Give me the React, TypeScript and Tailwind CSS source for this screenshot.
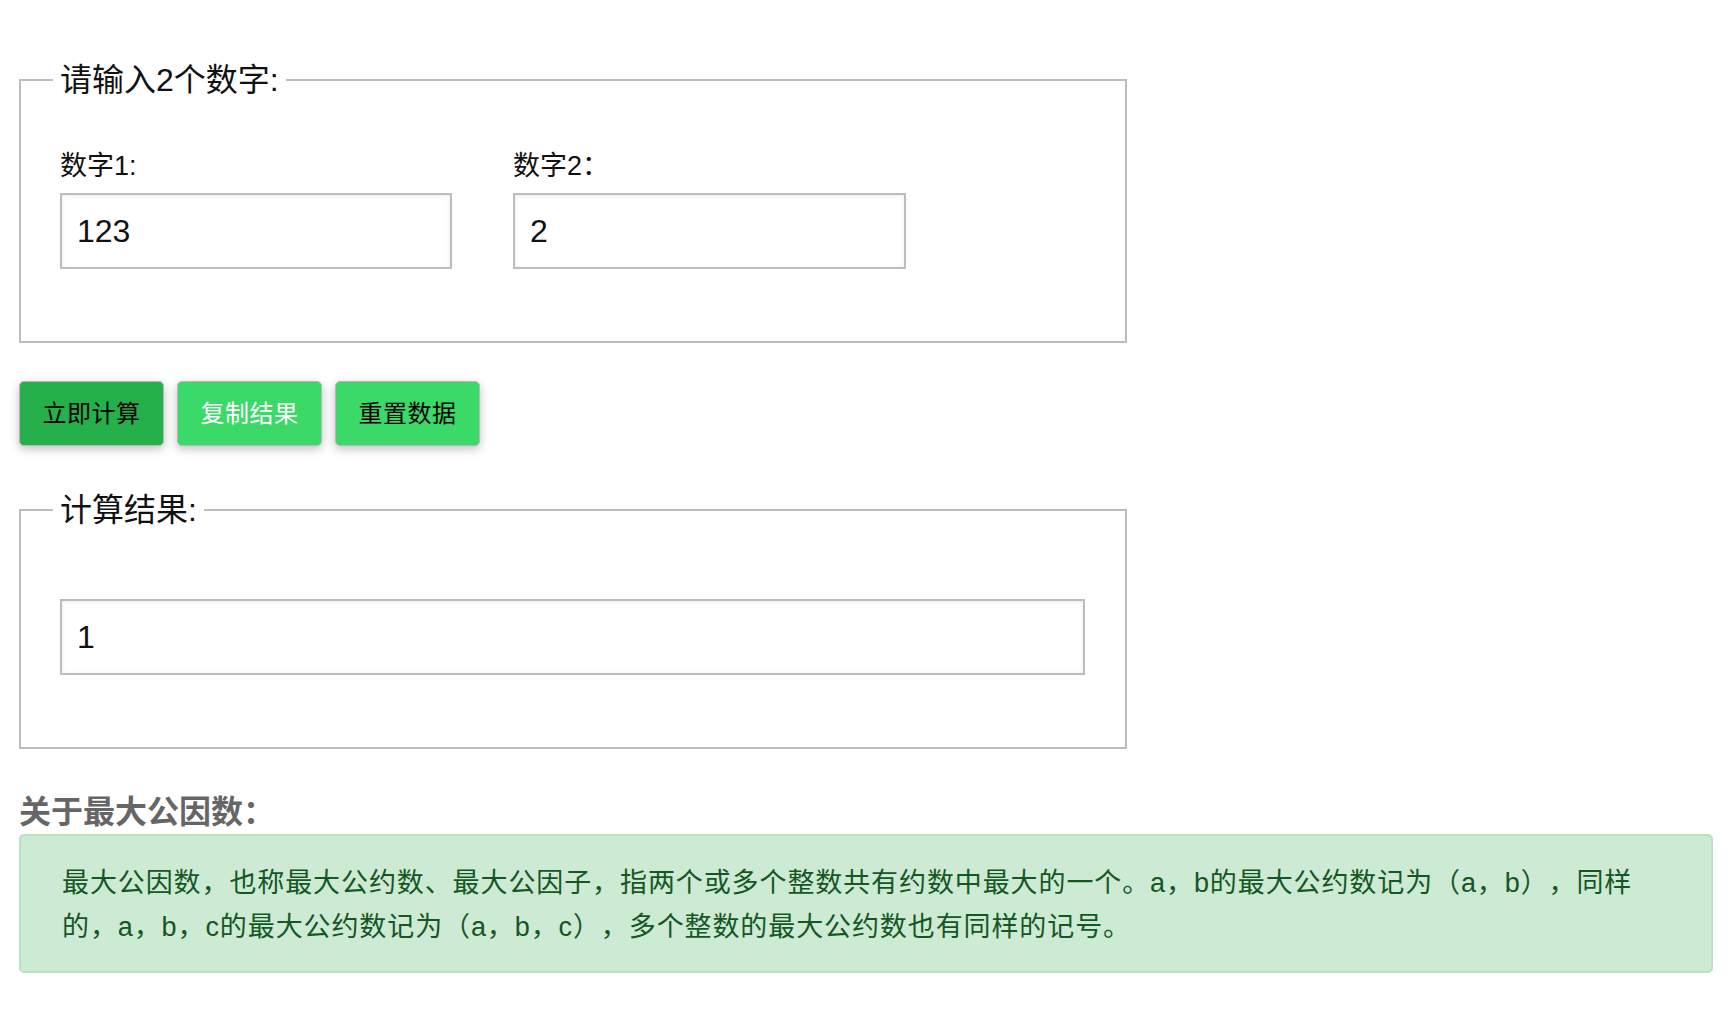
import { useState } from 'react';

const font = 'font-["Liberation_Sans","Noto_Sans_CJK_SC",sans-serif]';

function gcd(a: number, b: number): number {
  a = Math.abs(a);
  b = Math.abs(b);
  while (b) {
    const t = b;
    b = a % b;
    a = t;
  }
  return a;
}

export default function App() {
  const [n1, setN1] = useState('123');
  const [n2, setN2] = useState('2');
  const [result, setResult] = useState('1');

  const calc = () => {
    const a = parseInt(n1, 10);
    const b = parseInt(n2, 10);
    if (!isNaN(a) && !isNaN(b)) setResult(String(gcd(a, b)));
  };

  const inputCls =
    'h-[76px] border-2 border-[#bdbdbd] bg-white pl-[15px] text-[32px] text-[#111] outline-none shadow-[inset_0_1px_4px_rgba(0,0,0,0.08)]';

  return (
    <div className={`${font} min-h-screen bg-white pl-[19px] pr-[21px] pt-[62px] text-[#111] [text-spacing-trim:space-all]`}>
      <fieldset className="w-[1108px] border-2 border-[#bdbdbd]">
        <legend className="ml-[32px] px-[7px] text-[32px] leading-[36px]">请输入2个数字:</legend>
        <div className="flex gap-[61px] px-[39px] pb-[72px] pt-[50px]">
          <div className="flex flex-col">
            <label className="text-[27px] leading-[36px]">数字1:</label>
            <input
              className={`${inputCls} mt-[9px] w-[392px]`}
              value={n1}
              onChange={(e) => setN1(e.target.value)}
            />
          </div>
          <div className="flex flex-col">
            <label className="text-[27px] leading-[36px]">数字2：</label>
            <input
              className={`${inputCls} mt-[9px] w-[393px]`}
              value={n2}
              onChange={(e) => setN2(e.target.value)}
            />
          </div>
        </div>
      </fieldset>

      <div className="mt-[38px] flex gap-[13px]">
        <button
          onClick={calc}
          className="h-[65px] w-[145px] rounded-[5px] border border-[#b8b8b8] bg-[#25b04b] text-[24px] tracking-[0.5px] text-black shadow-[0_3px_10px_rgba(0,0,0,0.25)]"
        >
          立即计算
        </button>
        <button
          onClick={() => navigator.clipboard?.writeText(result)}
          className="h-[65px] w-[145px] rounded-[5px] border border-[#b8b8b8] bg-[#3ad968] text-[24px] tracking-[0.5px] text-white shadow-[0_3px_10px_rgba(0,0,0,0.25)]"
        >
          复制结果
        </button>
        <button
          onClick={() => {
            setN1('');
            setN2('');
            setResult('');
          }}
          className="h-[65px] w-[145px] rounded-[5px] border border-[#b8b8b8] bg-[#3ad968] text-[24px] tracking-[0.5px] text-black shadow-[0_3px_10px_rgba(0,0,0,0.25)]"
        >
          重置数据
        </button>
      </div>

      <fieldset className="mt-[46px] w-[1108px] border-2 border-[#bdbdbd]">
        <legend className="ml-[32px] px-[7px] text-[32px] leading-[36px]">计算结果:</legend>
        <div className="px-[39px] pb-[72px] pt-[71px]">
          <input className={`${inputCls} w-[1025px]`} value={result} readOnly />
        </div>
      </fieldset>

      <h3 className="mt-[45px] text-[32px] font-bold leading-[36px] text-[#666]">关于最大公因数：</h3>
      <div className="mt-[4px] rounded-[5px] border-2 border-[#b9e2c3] bg-[#cdead4] px-[41px] pb-[22px] pt-[25px] text-[27px] leading-[44px] tracking-[0.9px] text-[#155724]">
        最大公因数，也称最大公约数、最大公因子，指两个或多个整数共有约数中最大的一个。a，b的最大公约数记为（a，b），同样
        <br />
        的，a，b，c的最大公约数记为（a，b，c），多个整数的最大公约数也有同样的记号。
      </div>
    </div>
  );
}
